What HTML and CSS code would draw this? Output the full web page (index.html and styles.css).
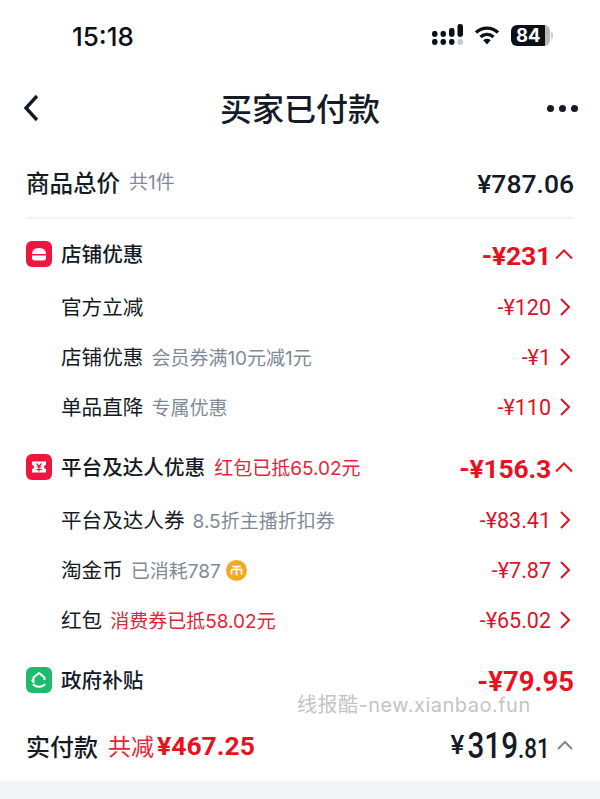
FILE: index.html
```html
<!DOCTYPE html>
<html lang="zh-CN">

<head>
    <meta charset="UTF-8">
    <meta name="viewport" content="width=device-width, initial-scale=1.0">
    <title>买家已付款</title>
    <link rel="stylesheet" href="styles.css">
</head>

<body>
    <div class="page">
        <header class="status-bar">
            <span class="clock">15:18</span>
            <div class="status-icons">
                <svg class="signal" width="31" height="22" viewBox="0 0 31 22">
                    <rect x="0" y="7" width="5.500" height="6" rx="2.400" fill="#0b0f17" />
                    <rect x="0" y="15" width="5.500" height="6" rx="2.400" fill="#0b0f17" />
                    <rect x="8.500" y="7" width="5.500" height="6" rx="2.400" fill="#0b0f17" />
                    <rect x="8.500" y="15" width="5.500" height="6" rx="2.400" fill="#0b0f17" />
                    <rect x="17" y="4" width="5.500" height="9" rx="2.400" fill="#0b0f17" />
                    <rect x="17" y="15" width="5.500" height="6" rx="2.400" fill="#0b0f17" />
                    <rect x="25.500" y="0" width="5.500" height="13" rx="2.400" fill="#0b0f17" />
                    <rect x="25.500" y="15" width="5.500" height="6" rx="2.400" fill="#c8c8c8" />
                </svg>
                <svg class="wifi" width="26" height="20" viewBox="0 0 25 20">
                    <path d="M1.500 7.500a16 16 0 0 1 22 0" fill="none" stroke="#0b0f17" stroke-width="3.200" />
                    <path d="M6 12a9.500 9.500 0 0 1 13 0" fill="none" stroke="#0b0f17" stroke-width="3.200" />
                    <path d="M8.800 15.200a5.400 5.400 0 0 1 7.400 0L12.500 19.500z" fill="#0b0f17" />
                </svg>
                <div class="battery">
                    <div class="battery-body"><span>84</span></div>
                    <i class="battery-cap"></i>
                </div>
            </div>
        </header>

        <nav class="nav-bar">
            <svg width="20" height="28" viewBox="0 0 20 28">
                <path d="M15 2 4 14l11 12" fill="none" stroke="#141b26" stroke-width="3.400" />
            </svg>
            <h1>买家已付款</h1>
            <div class="more"><i></i><i></i><i></i></div>
        </nav>

        <main class="content">
            <div class="summary">
                <span class="summary-title">商品总价</span>
                <span class="note">共1件</span>
                <span class="summary-price">¥787.06</span>
            </div>

            <section class="group group-shop">
                <div class="row head-row">
                    <svg class="badge" width="26" height="26" viewBox="0 0 26 26">
                        <rect width="26" height="26" rx="6" fill="#f0153f" />
                        <path d="M6 13c0-4 3-6 7-6s7 2 7 6z" fill="#fff" />
                        <path d="M6 14.500h14V17c0 1.500-1 2.500-2.500 2.500h-9C7 19.500 6 18.500 6 17z" fill="#fff" />
                    </svg>
                    <span class="head-title">店铺优惠</span>
                    <span class="head-amount">-¥231</span>
                    <svg class="arrow" width="20" height="12" viewBox="0 0 20 12">
                        <path d="M2 10.500 10 2.500l8 8" fill="none" stroke="#e8121f" stroke-width="2" />
                    </svg>
                </div>
                <div class="row sub-row">
                    <span class="sub-title">官方立减</span>
                    <span class="sub-amount">-¥120</span>
                    <svg class="chevron" width="12" height="20" viewBox="0 0 12 20">
                        <path d="M2 2l8 8-8 8" fill="none" stroke="#d9142a" stroke-width="2" />
                    </svg>
                </div>
                <div class="row sub-row">
                    <span class="sub-title">店铺优惠</span>
                    <span class="note">会员券满10元减1元</span>
                    <span class="sub-amount">-¥1</span>
                    <svg class="chevron" width="12" height="20" viewBox="0 0 12 20">
                        <path d="M2 2l8 8-8 8" fill="none" stroke="#d9142a" stroke-width="2" />
                    </svg>
                </div>
                <div class="row sub-row">
                    <span class="sub-title">单品直降</span>
                    <span class="note">专属优惠</span>
                    <span class="sub-amount">-¥110</span>
                    <svg class="chevron" width="12" height="20" viewBox="0 0 12 20">
                        <path d="M2 2l8 8-8 8" fill="none" stroke="#d9142a" stroke-width="2" />
                    </svg>
                </div>
            </section>

            <section class="group group-platform">
                <div class="row head-row">
                    <svg class="badge" width="26" height="26" viewBox="0 0 26 26">
                        <rect width="26" height="26" rx="6" fill="#f0153f" />
                        <path d="M6 7.500h14v3.500a2 2 0 0 0 0 4v3.500H6V15a2 2 0 0 0 0-4z" fill="#fff" />
                        <path d="M10.500 9.500 13 12.500l2.500-3M10.500 13h5M10.500 15.500h5M13 12.500v5" fill="none" stroke="#f0153f" stroke-width="1.200" />
                    </svg>
                    <span class="head-title">平台及达人优惠</span>
                    <span class="note note-red">红包已抵65.02元</span>
                    <span class="head-amount">-¥156.3</span>
                    <svg class="arrow" width="20" height="12" viewBox="0 0 20 12">
                        <path d="M2 10.500 10 2.500l8 8" fill="none" stroke="#e8121f" stroke-width="2" />
                    </svg>
                </div>
                <div class="row sub-row">
                    <span class="sub-title">平台及达人券</span>
                    <span class="note">8.5折主播折扣券</span>
                    <span class="sub-amount">-¥83.41</span>
                    <svg class="chevron" width="12" height="20" viewBox="0 0 12 20">
                        <path d="M2 2l8 8-8 8" fill="none" stroke="#d9142a" stroke-width="2" />
                    </svg>
                </div>
                <div class="row sub-row">
                    <span class="sub-title">淘金币</span>
                    <span class="note">已消耗787</span>
                    <svg class="coin" width="21" height="21" viewBox="0 0 21 21">
                        <circle cx="10.500" cy="10.500" r="10.500" fill="#f2ab1d" />
                        <path d="M6 6.500h9M10.500 6.500v9M5.500 9.500h10v5M5.500 9.500v5" fill="none" stroke="#fff" stroke-width="1.700" />
                    </svg>
                    <span class="sub-amount">-¥7.87</span>
                    <svg class="chevron" width="12" height="20" viewBox="0 0 12 20">
                        <path d="M2 2l8 8-8 8" fill="none" stroke="#d9142a" stroke-width="2" />
                    </svg>
                </div>
                <div class="row sub-row">
                    <span class="sub-title">红包</span>
                    <span class="note note-red">消费券已抵58.02元</span>
                    <span class="sub-amount">-¥65.02</span>
                    <svg class="chevron" width="12" height="20" viewBox="0 0 12 20">
                        <path d="M2 2l8 8-8 8" fill="none" stroke="#d9142a" stroke-width="2" />
                    </svg>
                </div>
            </section>

            <section class="group group-gov">
                <div class="row head-row">
                    <svg class="badge" width="26" height="26" viewBox="0 0 26 26">
                        <rect width="26" height="26" rx="6" fill="#1dbb6c" />
                        <path d="M7.500 16v-5.500L13 6l5.500 4.500V13M7 17c1.500 2 3.500 2.800 6 2.800 2.400 0 4.500-.8 6-2.800M7.500 12.500 5.500 14" fill="none" stroke="#fff" stroke-width="2" />
                    </svg>
                    <span class="head-title">政府补贴</span>
                    <span class="gov-amount">-¥79.95</span>
                </div>
            </section>
        </main>

        <footer class="pay-bar">
            <span class="pay-title">实付款</span>
            <span class="pay-saved">共减<b>¥467.25</b></span>
            <span class="pay-yen">¥</span>
            <span class="pay-digits"><b>319</b>.81</span>
            <svg class="pay-arrow" width="18" height="12" viewBox="0 0 18 12">
                <path d="M2 10 9 3l7 7" fill="none" stroke="#7d8792" stroke-width="2" />
            </svg>
        </footer>
        <div class="bottom-band"></div>

        <div class="watermark">线报酷-new.xianbao.fun</div>
    </div>
</body>

</html>
```

FILE: styles.css
```css
* {
    box-sizing: border-box;
}

body {
    margin: 0;
    background-color: #fff;
    color: #141b26;
    font-family: "Noto Sans CJK SC", sans-serif;
}

.page {
    position: relative;
    width: 600px;
    height: 799px;
    overflow: hidden;
    display: flex;
    flex-direction: column;
}

.status-bar {
    display: flex;
    align-items: center;
    height: 72px;
    padding: 0 47px 0 72px;
}

.clock {
    font-family: Inter, sans-serif;
    font-size: 26px;
    font-weight: 500;
    color: #0b0f17;
}

.status-icons {
    margin: 0 0 2px auto;
    display: flex;
    align-items: center;
    gap: 11px;
}

.battery {
    display: flex;
    align-items: center;
    gap: 1px;
}

.battery-body {
    width: 39px;
    height: 21px;
    border-radius: 6px;
    background: linear-gradient(to right, #0b0f17 86%, #b9b9b9 86%);
    color: #fff;
    font-family: Inter, sans-serif;
    font-size: 18.5px;
    font-weight: 700;
    line-height: 21px;
    padding-left: 5px;
}

.battery-cap {
    width: 2px;
    height: 7px;
    border-radius: 0 2px 2px 0;
    background-color: #c8c8c8;
}

.nav-bar {
    position: relative;
    display: flex;
    align-items: center;
    justify-content: space-between;
    height: 72px;
    padding: 0 22px;
}

.nav-bar h1 {
    position: absolute;
    left: 0;
    right: 0;
    margin: 0 0 3px;
    text-align: center;
    font-size: 32px;
    font-weight: 500;
}

.more {
    display: flex;
    gap: 5px;
}

.more i {
    width: 7px;
    height: 7px;
    border-radius: 50%;
    background-color: #141b26;
}

.content {
    flex: 1;
    padding: 0 26px;
}

.summary {
    display: flex;
    align-items: center;
    gap: 9px;
    height: 75px;
    padding-top: 2px;
    border-bottom: 2px solid #f3f3f4;
}

.summary-title {
    font-size: 23.5px;
    font-weight: 500;
}

.summary-price {
    margin: 3px 0 0 auto;
    font-family: Roboto, sans-serif;
    font-size: 26.5px;
    font-weight: 500;
}

.note {
    padding-bottom: 2px;
    font-family: Inter, "Noto Sans CJK SC", sans-serif;
    font-size: 19px;
    color: #7f8a99;
}

.note-red {
    color: #e3243b;
}

.row {
    display: flex;
    align-items: center;
}

.head-row {
    height: 50px;
    margin-bottom: 3px;
    gap: 9px;
}

.sub-row {
    height: 50px;
    padding-left: 35px;
    gap: 8px;
}

.group-shop {
    padding-top: 10px;
}

.group-platform,
.group-gov {
    padding-top: 10px;
}

.head-title {
    padding-bottom: 2px;
    font-size: 20.6px;
    font-weight: 500;
}

.head-amount {
    margin: 2px 0 0 auto;
    font-family: Roboto, sans-serif;
    font-size: 26.5px;
    font-weight: 700;
    letter-spacing: -0.2px;
    color: #e8121f;
}

.arrow {
    margin-left: -6px;
}

.gov-amount {
    margin: 3px 0 0 auto;
    font-family: Roboto, sans-serif;
    font-size: 27.5px;
    font-weight: 700;
    color: #e8121f;
}

.sub-title {
    padding-bottom: 2px;
    font-size: 20.6px;
}

.sub-amount {
    margin-left: auto;
    font-family: Roboto, sans-serif;
    font-size: 21.5px;
    color: #d9142a;
}

.chevron {
    margin-right: 3px;
}

.coin {
    margin-left: -3px;
}

.pay-bar {
    display: flex;
    align-items: center;
    height: 66px;
    padding: 0 26px 6px;
}

.pay-title {
    font-size: 24px;
    font-weight: 500;
}

.pay-saved {
    margin-left: 10px;
    font-size: 23px;
    color: #e3243b;
}

.pay-saved b {
    margin-left: 3px;
    font-family: Roboto, sans-serif;
    font-size: 26.5px;
    font-weight: 700;
    color: #e8121f;
}

.pay-yen {
    margin: 0 -17px 0 auto;
    font-family: Roboto, sans-serif;
    font-size: 26px;
    font-weight: 500;
}

/* the whole price is set narrower than Roboto */
.pay-digits {
    font-family: Roboto, sans-serif;
    font-size: 28px;
    font-weight: 500;
    transform: scaleX(0.8);
    transform-origin: right;
}

.pay-digits b {
    font-size: 37px;
    font-weight: 500;
}

.pay-arrow {
    margin-left: 6px;
}

.bottom-band {
    height: 18px;
    background-color: #f3f4f6;
}

.watermark {
    position: absolute;
    left: 297px;
    top: 689px;
    font-family: Inter, "Noto Sans CJK SC", sans-serif;
    font-size: 20px;
    letter-spacing: 0.5px;
    color: #c4c4c4;
}
```
